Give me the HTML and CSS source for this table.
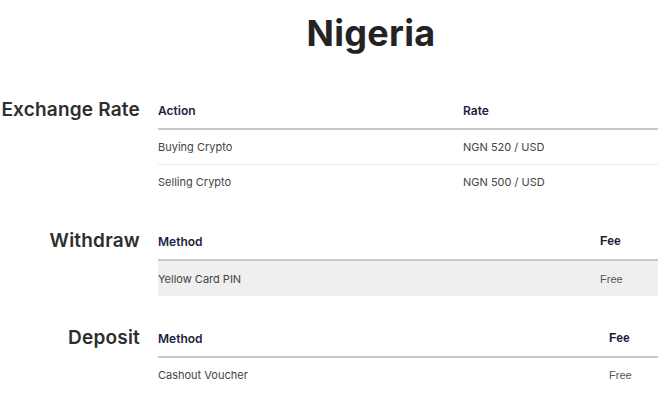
FILE: index.html
```html
<!DOCTYPE html>
<html lang="en">
<head>
<meta charset="utf-8">
<title>Nigeria</title>
<link rel="stylesheet" href="styles.css">
</head>
<body>
<main class="page">
  <h1 class="title">Nigeria</h1>

  <section class="block">
    <h2 class="label">Exchange Rate</h2>
    <table class="tbl tbl-rate">
      <thead><tr><th class="c1">Action</th><th>Rate</th></tr></thead>
      <tbody>
        <tr><td>Buying Crypto</td><td>NGN 520 / USD</td></tr>
        <tr><td>Selling Crypto</td><td>NGN 500 / USD</td></tr>
      </tbody>
    </table>
  </section>

  <section class="block">
    <h2 class="label">Withdraw</h2>
    <table class="tbl tbl-withdraw">
      <thead><tr><th class="c1">Method</th><th class="alt">Fee</th></tr></thead>
      <tbody>
        <tr class="shade"><td>Yellow Card PIN</td><td class="alt">Free</td></tr>
      </tbody>
    </table>
  </section>

  <section class="block">
    <h2 class="label">Deposit</h2>
    <table class="tbl tbl-deposit">
      <thead><tr><th class="c1">Method</th><th class="alt">Fee</th></tr></thead>
      <tbody>
        <tr><td>Cashout Voucher</td><td class="alt">Free</td></tr>
      </tbody>
    </table>
  </section>
</main>
</body>
</html>
```

FILE: styles.css
```css
html, body {
  margin: 0;
  padding: 0;
  background: #ffffff;
}

body {
  font-family: Inter, "Noto Sans", sans-serif;
  width: 658px;
  overflow: hidden;
}

.page {
  display: flex;
  flex-direction: column;
  gap: 24px;
}

.title {
  margin: 0;
  padding: 11px 0 0 84px;
  font-size: 36px;
  line-height: 44px;
  font-weight: 700;
  color: #232323;
  text-align: center;
  letter-spacing: 0.3px;
  margin-bottom: 13px;
}

.block {
  display: grid;
  grid-template-columns: 140px 500px;
  column-gap: 18px;
  align-items: start;
}

.label {
  margin: 0;
  font-size: 19px;
  line-height: 36px;
  font-weight: 600;
  color: #2e2e2e;
  text-align: right;
  white-space: nowrap;
  letter-spacing: 0.2px;
}

.tbl {
  width: 500px;
  border-collapse: collapse;
  table-layout: fixed;
}

.tbl th {
  height: 36px;
  padding: 0;
  text-align: left;
  font-size: 12px;
  font-weight: 600;
  color: #1f1c3e;
  border-bottom: 2px solid #c9c9c9;
  vertical-align: middle;
}

.tbl td {
  height: 34px;
  padding: 0;
  font-size: 11px;
  color: #444444;
  vertical-align: middle;
}

.tbl tbody tr + tr td {
  border-top: 1px solid #ececec;
}

.tbl-rate .c1 { width: 305px; }
.tbl-withdraw .c1 { width: 442px; }
.tbl-deposit .c1 { width: 451px; }

.tbl .alt {
  font-family: "Liberation Sans", Arial, sans-serif;
}

.tbl th.alt {
  font-weight: 700;
}

.tbl td.alt {
  color: #555555;
}

.shade td {
  background: #efefef;
  height: 35px;
}
```
